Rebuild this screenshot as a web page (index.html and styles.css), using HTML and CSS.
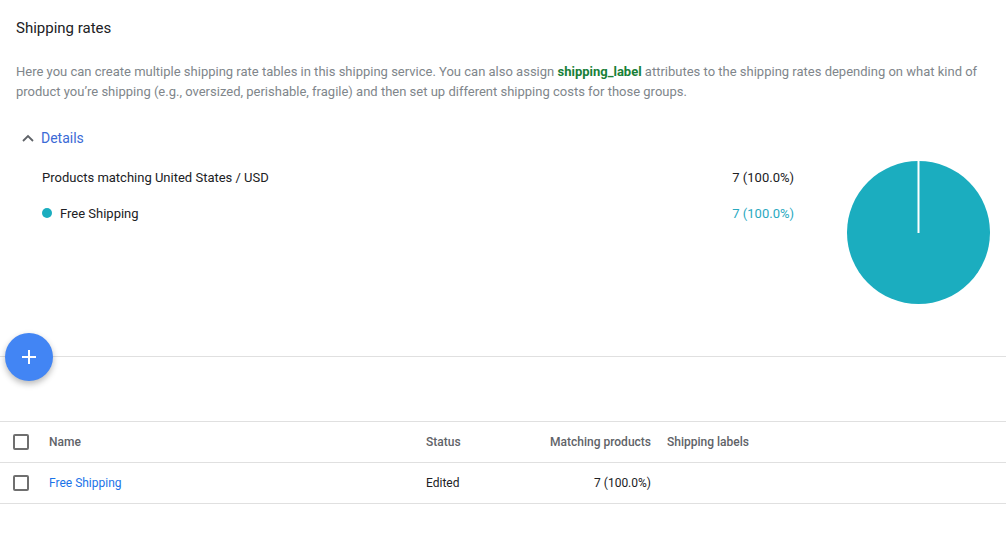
FILE: index.html
```html
<!DOCTYPE html>
<html lang="en">
<head>
<meta charset="UTF-8">
<meta name="viewport" content="width=device-width, initial-scale=1.0">
<title>Shipping rates</title>
<link rel="stylesheet" href="styles.css">
</head>
<body>
<div class="page">
    <h2 class="title">Shipping rates</h2>
    <p class="intro">Here you can create multiple shipping rate tables in this shipping service. You can also assign <b class="attr">shipping_label</b> attributes to the shipping rates depending on what kind of product you’re shipping (e.g., oversized, perishable, fragile) and then set up different shipping costs for those groups.</p>

    <div class="details-toggle">
        <svg class="chevron" width="14" height="14" viewBox="0 0 14 14"><path d="M2 10 L7 5 L12 10" fill="none" stroke="#5f6368" stroke-width="1.8"/></svg>
        <span>Details</span>
    </div>

    <div class="details">
        <div class="breakdown">
            <div class="row">
                <span>Products matching United States / USD</span>
                <span>7 (100.0%)</span>
            </div>
            <div class="row">
                <span class="legend"><i class="dot"></i>Free Shipping</span>
                <span class="teal">7 (100.0%)</span>
            </div>
        </div>
        <svg class="pie" width="143" height="143" viewBox="0 0 143 143">
            <circle cx="71.5" cy="71.5" r="71.5" fill="#1badbf"/>
            <line x1="71.5" y1="0" x2="71.5" y2="72" stroke="#fff" stroke-width="2"/>
        </svg>
    </div>

    <div class="divider">
        <button class="fab" aria-label="Add">
            <svg width="16" height="16" viewBox="0 0 16 16"><path d="M8 1 V15 M1 8 H15" stroke="#fff" stroke-width="2"/></svg>
        </button>
    </div>
</div>

<table class="rates">
    <tr>
        <th class="check"><span class="box"></span></th>
        <th class="name">Name</th>
        <th class="status">Status</th>
        <th class="num">Matching products</th>
        <th>Shipping labels</th>
    </tr>
    <tr>
        <td class="check"><span class="box"></span></td>
        <td class="name"><a href="#">Free Shipping</a></td>
        <td class="status">Edited</td>
        <td class="num">7 (100.0%)</td>
        <td></td>
    </tr>
</table>
</body>
</html>
```

FILE: styles.css
```css
body {
    font-family: Roboto, "Liberation Sans", Arial, sans-serif;
    margin: 0;
    color: #202124;
    background: #fff;
}
.page {
    padding: 18px 0 0;
}
.title {
    font-size: 15px;
    font-weight: 400;
    line-height: 20px;
    margin: 0 16px;
}
.intro {
    font-size: 13px;
    line-height: 20px;
    color: #80868b;
    margin: 24px 16px 0;
}
.attr {
    color: #188038;
    font-weight: 700;
}
.details-toggle {
    display: flex;
    align-items: center;
    gap: 6px;
    margin: 26px 0 0 21px;
    font-size: 14px;
    line-height: 20px;
    color: #3b6ad6;
}
.details {
    display: flex;
    align-items: flex-start;
    margin: 11px 16px 0 42px;
}
.breakdown {
    width: 752px;
    flex-shrink: 0;
}
.row {
    display: flex;
    justify-content: space-between;
    align-items: center;
    height: 36px;
    font-size: 13px;
}
.legend {
    display: flex;
    align-items: center;
}
.dot {
    width: 10px;
    height: 10px;
    border-radius: 50%;
    background: #1badbf;
    margin-right: 8px;
}
.teal {
    color: #2aa9bf;
}
.pie {
    flex-shrink: 0;
    margin: 2px 0 0 53px;
}
.divider {
    position: relative;
    margin-top: 52px;
    border-top: 1px solid #e0e0e0;
}
.fab {
    position: absolute;
    left: 5px;
    top: -24px;
    width: 48px;
    height: 48px;
    border: none;
    border-radius: 50%;
    background: #4285f4;
    box-shadow: 0 3px 6px rgba(0, 0, 0, 0.28);
    display: flex;
    align-items: center;
    justify-content: center;
    padding: 0;
}
.rates {
    width: 100%;
    border-collapse: collapse;
    margin-top: 64px;
    font-size: 12px;
}
.rates th, .rates td {
    border-top: 1px solid #e0e0e0;
    border-bottom: 1px solid #e0e0e0;
    height: 40px;
    padding: 0;
    text-align: left;
    vertical-align: middle;
}
.rates th {
    font-weight: 500;
    color: #5f6368;
}
.rates .check {
    width: 49px;
    padding-left: 13px;
    box-sizing: border-box;
}
.box {
    display: block;
    width: 12px;
    height: 12px;
    border: 2px solid #6f6f6f;
    border-radius: 2px;
}
.rates .name {
    width: 377px;
}
.rates .status {
    width: 100px;
}
.rates .num {
    width: 125px;
    padding-right: 16px;
    text-align: right;
}
.rates a {
    color: #1a73e8;
    text-decoration: none;
}
```
